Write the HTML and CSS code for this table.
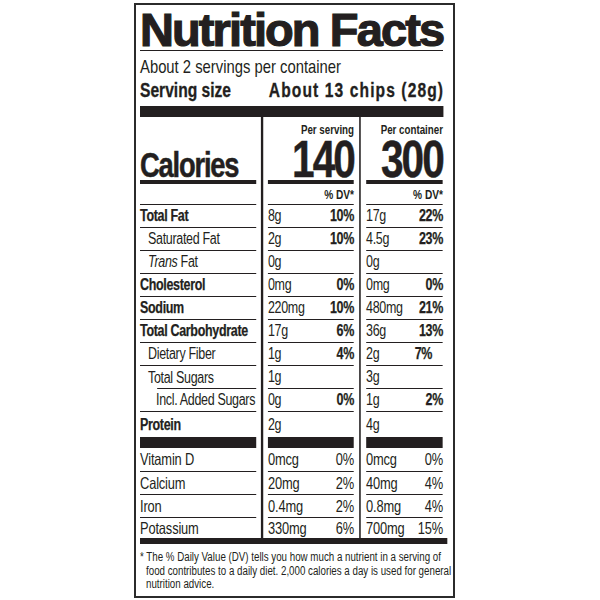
FILE: index.html
```html
<!DOCTYPE html>
<html lang="en">
<head>
<meta charset="utf-8">
<title>Nutrition Facts</title>
<link rel="stylesheet" href="styles.css">
</head>
<body>
<div class="label">
  <h1 class="title">Nutrition Facts</h1>
  <div class="cond">
    <p class="servings">About 2 servings per container</p>
    <div class="serving-size"><span>Serving size</span><span class="ss-val">About 13 chips (28g)</span></div>
    <div class="bar-thick"></div>

    <div class="table">
      <div class="sep sep1"></div>
      <div class="sep sep2"></div>

      <div class="cell hdr hdr-label"><span class="calories">Calories</span></div>
      <div class="cell hdr hdr-val"><div class="per">Per serving</div><div class="kcal">140</div></div>
      <div class="cell hdr hdr-val"><div class="per">Per container</div><div class="kcal">300</div></div>

      <div class="cell dv"></div>
      <div class="cell dv"><span>% DV*</span></div>
      <div class="cell dv"><span>% DV*</span></div>

      <div class="cell b">Total Fat</div>
      <div class="cell"><span>8g</span><span class="b">10%</span></div>
      <div class="cell"><span>17g</span><span class="b">22%</span></div>

      <div class="cell in1">Saturated Fat</div>
      <div class="cell"><span>2g</span><span class="b">10%</span></div>
      <div class="cell"><span>4.5g</span><span class="b">23%</span></div>

      <div class="cell in1"><span><i>Trans</i> Fat</span></div>
      <div class="cell"><span>0g</span></div>
      <div class="cell"><span>0g</span></div>

      <div class="cell b">Cholesterol</div>
      <div class="cell"><span>0mg</span><span class="b">0%</span></div>
      <div class="cell"><span>0mg</span><span class="b">0%</span></div>

      <div class="cell b">Sodium</div>
      <div class="cell"><span>220mg</span><span class="b">10%</span></div>
      <div class="cell"><span>480mg</span><span class="b">21%</span></div>

      <div class="cell b">Total Carbohydrate</div>
      <div class="cell"><span>17g</span><span class="b">6%</span></div>
      <div class="cell"><span>36g</span><span class="b">13%</span></div>

      <div class="cell in1">Dietary Fiber</div>
      <div class="cell"><span>1g</span><span class="b">4%</span></div>
      <div class="cell"><span>2g</span><span class="b shift">7%</span></div>

      <div class="cell in1 short-line">Total Sugars</div>
      <div class="cell"><span>1g</span></div>
      <div class="cell"><span>3g</span></div>

      <div class="cell in2">Incl. Added Sugars</div>
      <div class="cell"><span>0g</span><span class="b">0%</span></div>
      <div class="cell"><span>1g</span><span class="b">2%</span></div>

      <div class="cell b nb">Protein</div>
      <div class="cell nb"><span>2g</span></div>
      <div class="cell nb"><span>4g</span></div>

      <div class="cell blk"></div>
      <div class="cell blk"></div>
      <div class="cell blk"></div>

      <div class="cell vit">Vitamin D</div>
      <div class="cell vit"><span>0mcg</span><span>0%</span></div>
      <div class="cell vit"><span>0mcg</span><span>0%</span></div>

      <div class="cell vit">Calcium</div>
      <div class="cell vit"><span>20mg</span><span>2%</span></div>
      <div class="cell vit"><span>40mg</span><span>4%</span></div>

      <div class="cell vit">Iron</div>
      <div class="cell vit"><span>0.4mg</span><span>2%</span></div>
      <div class="cell vit"><span>0.8mg</span><span>4%</span></div>

      <div class="cell vit nb">Potassium</div>
      <div class="cell vit nb"><span>330mg</span><span>6%</span></div>
      <div class="cell vit nb"><span>700mg</span><span>15%</span></div>
    </div>

    <div class="bar-mid"></div>
    <p class="footnote">* The % Daily Value (DV) tells you how much a nutrient in a serving of<br>food contributes to a daily diet. 2,000 calories a day is used for general<br>nutrition advice.</p>
  </div>
</div>
</body>
</html>
```
FILE: styles.css
```css
html, body {
  margin: 0;
  padding: 0;
  background: #ffffff;
}

.label {
  box-sizing: border-box;
  margin: 3px 0 0 134px;
  width: 321px;
  height: 595px;
  border: 2px solid #2b2b2b;
  padding: 0 10px 0 4px;
  font-family: "Liberation Sans", Arial, sans-serif;
  color: #231f20;
}

.title {
  margin: 5px 0 0;
  height: 40px;
  font: bold 47px/40px "Liberation Sans", Arial, sans-serif;
  letter-spacing: -1.9px;
  -webkit-text-stroke: 1.2px #231f20;
  white-space: nowrap;
  border-bottom: 1px solid #231f20;
}

/* condensed block: laid out wide, then narrowed like a condensed typeface */
.cond {
  width: 388.5px;
  transform: scaleX(0.78);
  transform-origin: 0 0;
}

.servings {
  margin: 6px 0 0;
  font-size: 19px;
  line-height: 20px;
  white-space: nowrap;
}

.serving-size {
  display: flex;
  justify-content: space-between;
  margin-top: 2px;
  font-size: 20px;
  line-height: 22px;
  font-weight: bold;
  white-space: nowrap;
  -webkit-text-stroke: 0.3px #231f20;
}
.ss-val {
  letter-spacing: 1.4px;
  margin-right: -1.4px;
}

.bar-thick {
  height: 11px;
  margin-top: 5px;
  background: #231f20;
}

.table {
  display: grid;
  grid-template-columns: 148.7px 15.4px 110.3px 15.4px 98.7px;
  grid-template-rows: 67px 21px repeat(9, 23px) 25px 11px 24px 23px 23px 20px;
}

.sep {
  grid-row: 1 / -1;
  justify-self: center;
  width: 2.6px;
  background: #231f20;
}
.sep1 { grid-column: 2; }
.sep2 { grid-column: 4; }

.cell {
  box-sizing: border-box;
  display: flex;
  align-items: center;
  justify-content: space-between;
  border-bottom: 1px solid #231f20;
  font-size: 16px;
  letter-spacing: -0.4px;
  white-space: nowrap;
}
.cell.nb { border-bottom: none; }
.b {
  font-weight: bold;
  -webkit-text-stroke: 0.25px #231f20;
}
.in1 { padding-left: 10.3px; }
.in2 { padding-left: 20.5px; }
.shift { margin-right: 14px; }

.short-line {
  border-bottom: none;
  background: linear-gradient(#231f20, #231f20) right bottom / calc(100% - 21.8px) 1px no-repeat;
}

.hdr {
  border-bottom-width: 4px;
}
.hdr-label {
  align-items: flex-end;
}
.calories {
  font-weight: bold;
  font-size: 35px;
  line-height: 30px;
  letter-spacing: -1.5px;
  -webkit-text-stroke: 0.5px #231f20;
}
.hdr-val {
  flex-direction: column;
  align-items: flex-end;
  justify-content: flex-end;
  padding-bottom: 1px;
}
.per {
  height: 14px;
  font-weight: bold;
  font-size: 12.5px;
  line-height: 14px;
  letter-spacing: 0;
}
.kcal {
  height: 40px;
  margin-top: 2px;
  font-weight: bold;
  font-size: 52px;
  line-height: 40px;
  letter-spacing: -2.4px;
  -webkit-text-stroke: 0.5px #231f20;
}

.dv {
  justify-content: flex-end;
  font-weight: bold;
  font-size: 13px;
  letter-spacing: 0;
}

.blk {
  border-bottom: none;
  background: #231f20;
}

.vit {
  font-size: 16.5px;
  letter-spacing: -0.2px;
}

.bar-mid {
  height: 6px;
  margin-right: -5px;
  background: #231f20;
}

.footnote {
  margin: 7px 0 0;
  padding-left: 7.7px;
  text-indent: -7.7px;
  font-size: 12.5px;
  line-height: 13.5px;
  white-space: nowrap;
}
```
